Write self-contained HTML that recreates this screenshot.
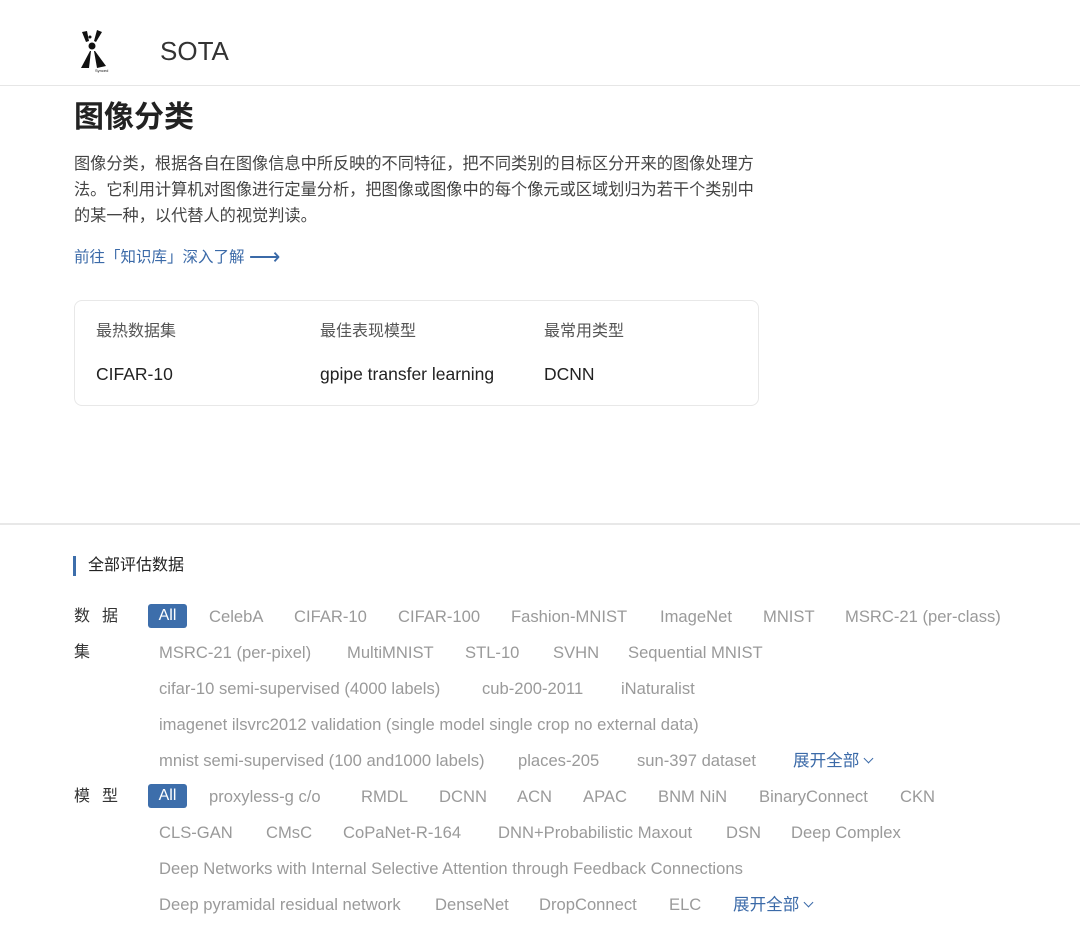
<!DOCTYPE html><html><head><meta charset="utf-8"><style>
*{margin:0;padding:0;box-sizing:border-box}
body{width:1080px;height:932px;background:#fff;font-family:"Liberation Sans","Noto Sans CJK SC",sans-serif;position:relative;overflow:hidden;color:#333}
.a{position:absolute;white-space:nowrap}
.t{font-size:16.6px;line-height:20px;color:#9a9a9a;margin-top:2px}
.b{color:#3b6aa8}
.all{position:absolute;width:39px;height:24px;background:#3d6eab;border-radius:3px;color:#fff;font-size:16px;line-height:24px;text-align:center;margin-top:1px}
.lab{font-size:16px;line-height:20px;color:#333;margin-top:2px}
.chev{display:inline-block;width:7px;height:7px;border-right:1.5px solid #3b6aa8;border-bottom:1.5px solid #3b6aa8;transform:rotate(45deg);margin-left:6px;vertical-align:4px}
</style></head><body>
<svg class="a" style="left:78px;top:28px" width="34" height="46" viewBox="0 0 34 46">
<polygon points="4,4 9,3 11,13 8,14" fill="#111"/><polygon points="19,2 24,4 18,14 16,13" fill="#111"/>
<circle cx="12" cy="9" r="1.5" fill="#111"/><circle cx="14" cy="18" r="3.5" fill="#111"/>
<polygon points="12,23 13,23 11,40 3,40" fill="#111"/><polygon points="16,23 17,23 28,38 19,40" fill="#111"/>
<text x="17" y="44" font-size="4" fill="#111">Synced</text></svg>
<div class="a" style="left:160px;top:36px;font-size:26px;line-height:30px;color:#333">SOTA</div>
<div class="a" style="left:0;top:85px;width:1080px;height:1px;background:#e6e6e6"></div>
<div class="a" style="left:74px;top:98px;font-size:30px;line-height:40px;font-weight:bold;color:#222">图像分类</div>
<div class="a" style="left:74px;top:151px;width:680px;font-size:16.2px;line-height:26px;color:#444;white-space:normal">图像分类，根据各自在图像信息中所反映的不同特征，把不同类别的目标区分开来的图像处理方法。它利用计算机对图像进行定量分析，把图像或图像中的每个像元或区域划归为若干个类别中的某一种，以代替人的视觉判读。</div>
<div class="a b" style="left:74px;top:246px;font-size:15.5px;line-height:22px">前往「知识库」深入了解 <span style="font-size:22px;vertical-align:-2px">⟶</span></div>
<div class="a" style="left:74px;top:300px;width:685px;height:106px;border:1px solid #e8e8e8;border-radius:8px"></div>
<div class="a" style="left:96px;top:321px;font-size:16px;line-height:22px;color:#555">最热数据集</div>
<div class="a" style="left:320px;top:321px;font-size:16px;line-height:22px;color:#555">最佳表现模型</div>
<div class="a" style="left:544px;top:321px;font-size:16px;line-height:22px;color:#555">最常用类型</div>
<div class="a" style="left:96px;top:363px;font-size:17.5px;line-height:22px;color:#222">CIFAR-10</div>
<div class="a" style="left:320px;top:363px;font-size:17.5px;line-height:22px;color:#222">gpipe transfer learning</div>
<div class="a" style="left:544px;top:363px;font-size:17.5px;line-height:22px;color:#222">DCNN</div>
<div class="a" style="left:0;top:523px;width:1080px;height:2px;background:#e8e8e8"></div>
<div class="a" style="left:73px;top:556px;width:3px;height:20px;background:#3d6eab"></div>
<div class="a" style="left:88px;top:555px;font-size:16px;line-height:22px;color:#222">全部评估数据</div>

<div class="a lab" style="left:74px;top:605px">数</div><div class="a lab" style="left:102px;top:605px">据</div>
<div class="a lab" style="left:74px;top:641px">集</div>
<div class="a lab" style="left:74px;top:785px">模</div><div class="a lab" style="left:102px;top:785px">型</div>

<div class="all" style="left:148px;top:603px">All</div>
<div class="a t" style="left:209px;top:605px">CelebA</div>
<div class="a t" style="left:294px;top:605px">CIFAR-10</div>
<div class="a t" style="left:398px;top:605px">CIFAR-100</div>
<div class="a t" style="left:511px;top:605px">Fashion-MNIST</div>
<div class="a t" style="left:660px;top:605px">ImageNet</div>
<div class="a t" style="left:763px;top:605px">MNIST</div>
<div class="a t" style="left:845px;top:605px">MSRC-21 (per-class)</div>

<div class="a t" style="left:159px;top:641px">MSRC-21 (per-pixel)</div>
<div class="a t" style="left:347px;top:641px">MultiMNIST</div>
<div class="a t" style="left:465px;top:641px">STL-10</div>
<div class="a t" style="left:553px;top:641px">SVHN</div>
<div class="a t" style="left:628px;top:641px">Sequential MNIST</div>

<div class="a t" style="left:159px;top:677px">cifar-10 semi-supervised (4000 labels)</div>
<div class="a t" style="left:482px;top:677px">cub-200-2011</div>
<div class="a t" style="left:621px;top:677px">iNaturalist</div>

<div class="a t" style="left:159px;top:713px">imagenet ilsvrc2012 validation (single model single crop no external data)</div>

<div class="a t" style="left:159px;top:749px">mnist semi-supervised (100 and1000 labels)</div>
<div class="a t" style="left:518px;top:749px">places-205</div>
<div class="a t" style="left:637px;top:749px">sun-397 dataset</div>
<div class="a t b" style="left:793px;top:749px">展开全部<span class="chev"></span></div>

<div class="all" style="left:148px;top:783px">All</div>
<div class="a t" style="left:209px;top:785px">proxyless-g c/o</div>
<div class="a t" style="left:361px;top:785px">RMDL</div>
<div class="a t" style="left:439px;top:785px">DCNN</div>
<div class="a t" style="left:517px;top:785px">ACN</div>
<div class="a t" style="left:583px;top:785px">APAC</div>
<div class="a t" style="left:658px;top:785px">BNM NiN</div>
<div class="a t" style="left:759px;top:785px">BinaryConnect</div>
<div class="a t" style="left:900px;top:785px">CKN</div>

<div class="a t" style="left:159px;top:821px">CLS-GAN</div>
<div class="a t" style="left:266px;top:821px">CMsC</div>
<div class="a t" style="left:343px;top:821px">CoPaNet-R-164</div>
<div class="a t" style="left:498px;top:821px">DNN+Probabilistic Maxout</div>
<div class="a t" style="left:726px;top:821px">DSN</div>
<div class="a t" style="left:791px;top:821px">Deep Complex</div>

<div class="a t" style="left:159px;top:857px">Deep Networks with Internal Selective Attention through Feedback Connections</div>

<div class="a t" style="left:159px;top:893px">Deep pyramidal residual network</div>
<div class="a t" style="left:435px;top:893px">DenseNet</div>
<div class="a t" style="left:539px;top:893px">DropConnect</div>
<div class="a t" style="left:669px;top:893px">ELC</div>
<div class="a t b" style="left:733px;top:893px">展开全部<span class="chev"></span></div>
</body></html>
